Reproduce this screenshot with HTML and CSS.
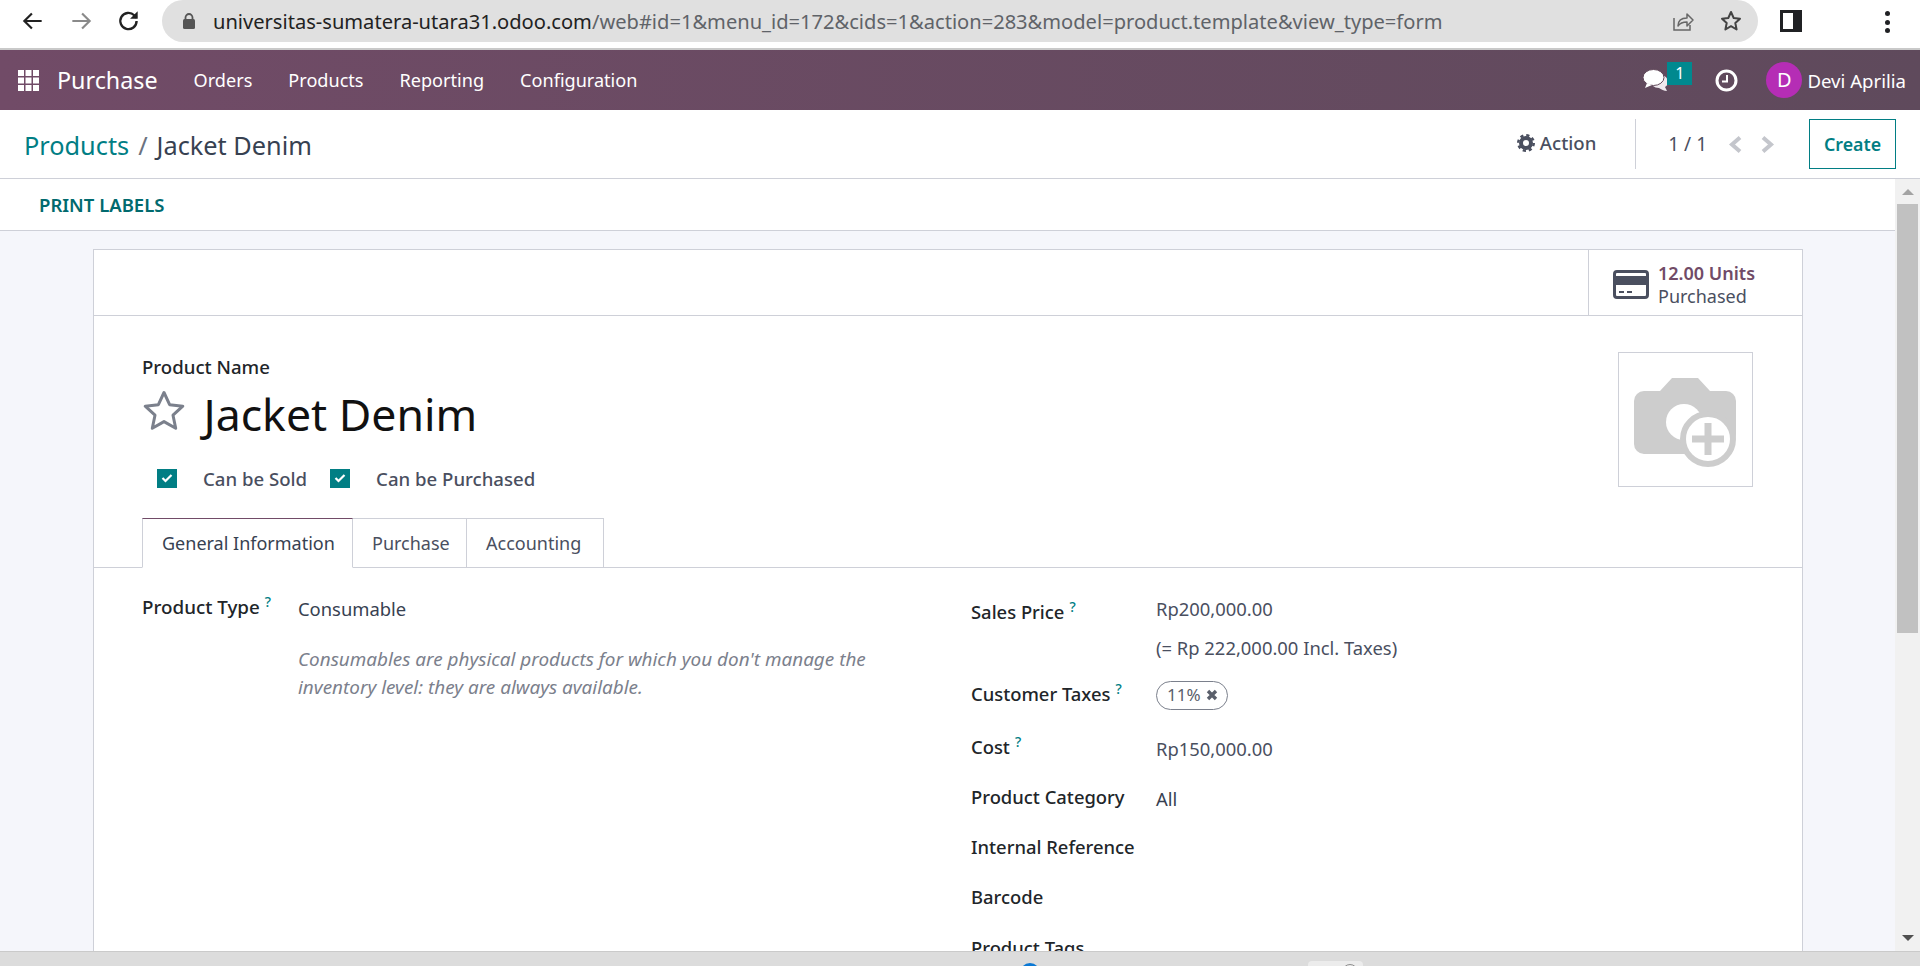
FILE: index.html
```html
<!DOCTYPE html>
<html lang="en">
<head>
<meta charset="utf-8">
<title>Jacket Denim</title>
<link rel="stylesheet" href="styles.css">
</head>
<body>
<div class="page">
  <header class="chrome">
    <div class="chrome-nav">
      <svg class="ci" width="26" height="26" viewBox="0 0 24 24"><path d="M20 12H4.500M11 5l-7 7 7 7" fill="none" stroke="#222" stroke-width="2"/></svg>
      <svg class="ci" width="26" height="26" viewBox="0 0 24 24"><path d="M4 12h15.500M13 5l7 7-7 7" fill="none" stroke="#8a8a8a" stroke-width="2"/></svg>
      <svg class="ci" width="26" height="26" viewBox="0 0 24 24"><path d="M19 12a7.500 7.500 0 1 1-2.200-5.300L19 9" fill="none" stroke="#222" stroke-width="2.200"/><path d="M20 3v7h-7z" fill="#222"/></svg>
    </div>
    <div class="omnibox">
      <svg class="lock" width="14" height="18" viewBox="0 0 14 18"><path d="M3.500 8V5.500a3.500 3.500 0 0 1 7 0V8" fill="none" stroke="#555" stroke-width="1.800"/><rect x="1" y="7" width="12" height="10" rx="1.500" fill="#555"/></svg>
      <div class="url"><span class="url-host">universitas-sumatera-utara31.odoo.com</span>/web#id=1&amp;menu_id=172&amp;cids=1&amp;action=283&amp;model=product.template&amp;view_type=form</div>
      <svg class="omni-icon" width="24" height="24" viewBox="0 0 24 24"><path d="M3 9v12h16v-5" fill="none" stroke="#666" stroke-width="1.500"/><path d="M7 17c0-6 4-8 9-8V5l6 6-6 6v-4c-4 0-7 1-9 4z" fill="none" stroke="#666" stroke-width="1.500" stroke-linejoin="round"/></svg>
      <svg class="omni-icon" width="24" height="24" viewBox="0 0 24 24"><path d="M12 3l2.700 6 6.300.7-4.700 4.300 1.300 6.500L12 17.200l-5.600 3.300 1.300-6.500L3 9.700 9.300 9z" fill="none" stroke="#444" stroke-width="2" stroke-linejoin="round"/></svg>
    </div>
    <div class="side-panel"><span></span></div>
    <div class="kebab"><i></i><i></i><i></i></div>
  </header>

  <nav class="navbar">
    <svg class="apps" width="21" height="21" viewBox="0 0 21 21" fill="#fff"><rect width="6" height="6"/><rect x="7.500" width="6" height="6"/><rect x="15" width="6" height="6"/><rect y="7.500" width="6" height="6"/><rect x="7.500" y="7.500" width="6" height="6"/><rect x="15" y="7.500" width="6" height="6"/><rect y="15" width="6" height="6"/><rect x="7.500" y="15" width="6" height="6"/><rect x="15" y="15" width="6" height="6"/></svg>
    <span class="brand">Purchase</span>
    <span class="menu-item">Orders</span>
    <span class="menu-item">Products</span>
    <span class="menu-item">Reporting</span>
    <span class="menu-item">Configuration</span>
    <div class="nav-right">
      <div class="chat">
        <svg width="27" height="23" viewBox="0 0 27 23"><path d="M14 5c6 0 11 3 11 8 0 2-1 4-3 5l2 4c-3 0-6-2-8-3-5 0-8-3-8-7s3-7 6-7z" fill="#efe9ee"/><ellipse cx="10.500" cy="8.500" rx="10.500" ry="8" fill="#fff" stroke="#624a5b" stroke-width="1"/><path d="M4 14l-2 5 7-3z" fill="#fff"/></svg>
        <span class="chat-badge">1</span>
      </div>
      <svg class="clock" width="23" height="23" viewBox="0 0 23 23"><circle cx="11.500" cy="11.500" r="9.500" fill="none" stroke="#fff" stroke-width="3"/><path d="M12 6v6.500H7" fill="none" stroke="#fff" stroke-width="2"/></svg>
      <span class="avatar">D</span>
      <span class="user">Devi Aprilia</span>
    </div>
  </nav>

  <section class="control-panel">
    <div class="crumbs"><span class="crumb-link">Products</span><span class="crumb-sep">/</span><span class="crumb-cur">Jacket Denim</span></div>
    <div class="action">
      <svg width="18" height="18" viewBox="0 0 18 18"><circle cx="9" cy="9" r="5" fill="none" stroke="#4a4f5f" stroke-width="4"/><circle cx="9" cy="9" r="7.800" fill="none" stroke="#4a4f5f" stroke-width="2.400" stroke-dasharray="3.200 2.930"/></svg>
      <span>Action</span>
    </div>
    <div class="pager">
      <span class="pager-count">1 / 1</span>
      <svg width="15" height="19" viewBox="0 0 15 19"><path d="M12 2.500l-8 7 8 7" fill="none" stroke="#c4c6cc" stroke-width="4"/></svg>
      <svg width="15" height="19" viewBox="0 0 15 19"><path d="M3 2.500l8 7-8 7" fill="none" stroke="#c4c6cc" stroke-width="4"/></svg>
    </div>
    <div class="create">Create</div>
  </section>

  <div class="work">
    <main class="main">
      <div class="statusbar"><span class="print">PRINT LABELS</span></div>
      <div class="canvas">
        <article class="sheet">
          <div class="stats">
            <div class="stat">
              <svg width="36" height="29" viewBox="0 0 36 29"><rect x="1.500" y="1.500" width="33" height="26" rx="2.500" fill="none" stroke="#4a4f5f" stroke-width="3"/><rect x="2" y="6" width="32" height="9" fill="#4a4f5f"/><path d="M6 22h5M14 22h5" stroke="#4a4f5f" stroke-width="2"/></svg>
              <div class="stat-text"><div class="stat-value">12.00 Units</div><div class="stat-label">Purchased</div></div>
            </div>
          </div>
          <div class="head">
            <div>
              <div class="name-label">Product Name</div>
              <div class="title-row">
                <svg width="44" height="42" viewBox="0 0 44 42"><path d="M22 3.500l5.600 12.200 13.200 1.500-9.800 9 2.700 13L22 32.600 10.300 39.200l2.700-13-9.800-9 13.200-1.500z" fill="none" stroke="#7b808c" stroke-width="3" stroke-linejoin="round"/></svg>
                <h1 class="title">Jacket Denim</h1>
              </div>
              <div class="options">
                <span class="check"><svg width="12" height="10" viewBox="0 0 12 10"><path d="M1.500 5l3 3 6-6" fill="none" stroke="#fff" stroke-width="2.200"/></svg></span>
                <span class="opt-label first">Can be Sold</span>
                <span class="check"><svg width="12" height="10" viewBox="0 0 12 10"><path d="M1.500 5l3 3 6-6" fill="none" stroke="#fff" stroke-width="2.200"/></svg></span>
                <span class="opt-label">Can be Purchased</span>
              </div>
            </div>
            <div class="image-box">
              <svg width="104" height="92" viewBox="0 0 104 92">
                <path d="M10 13h16L38 0h26l12 13h16a10 10 0 0 1 10 10v33a20 20 0 0 1-20 20H10A10 10 0 0 1 0 66V23a10 10 0 0 1 10-10z" fill="#cdcdcd"/>
                <circle cx="50" cy="44" r="18" fill="#fff"/>
                <circle cx="74" cy="61" r="25" fill="#fff" stroke="#cdcdcd" stroke-width="6"/>
                <path d="M74 45v32M58 61h32" stroke="#cdcdcd" stroke-width="7"/>
              </svg>
            </div>
          </div>
          <div class="tabs">
            <span class="tab active">General Information</span>
            <span class="tab">Purchase</span>
            <span class="tab">Accounting</span>
          </div>
          <div class="form">
            <div class="col-left">
              <div class="type-row">
                <span class="label">Product Type<sup class="help">?</sup></span>
                <span class="value">Consumable</span>
              </div>
              <p class="note">Consumables are physical products for which you don't manage the inventory level: they are always available.</p>
            </div>
            <div class="col-right">
              <div class="row r-price"><span class="label">Sales Price<sup class="help">?</sup></span><span class="value muted shift-up">Rp200,000.00</span></div>
              <div class="row r-incl"><span class="label"></span><span class="value muted">(= Rp 222,000.00 Incl. Taxes)</span></div>
              <div class="row r-tax"><span class="label">Customer Taxes<sup class="help">?</sup></span><span class="tag">11%<svg width="12" height="12" viewBox="0 0 12 12"><path d="M2 2l8 8M10 2l-8 8" stroke="#5a5f6b" stroke-width="3.400"/></svg></span></div>
              <div class="row r-cost"><span class="label">Cost<sup class="help">?</sup></span><span class="value muted shift-down">Rp150,000.00</span></div>
              <div class="row r-std"><span class="label">Product Category</span><span class="value shift-down">All</span></div>
              <div class="row r-std"><span class="label">Internal Reference</span></div>
              <div class="row r-std"><span class="label">Barcode</span></div>
              <div class="row r-std r-wide"><span class="label">Product Tags</span></div>
            </div>
          </div>
        </article>
      </div>
    </main>
    <aside class="scrollbar">
      <span class="arrow up"></span>
      <span class="thumb"></span>
      <span class="arrow down"></span>
    </aside>
  </div>

  <footer class="taskbar">
    <span class="task-dot"></span>
    <span class="task-box"><i></i></span>
  </footer>
</div>
</body>
</html>
```

FILE: styles.css
```css
* { box-sizing: border-box; }
html, body { margin: 0; height: 100%; overflow: hidden; }
body { font-family: "Noto Sans", "Liberation Sans", sans-serif; font-size: 18px; color: #374151; background: #fff; }
.page { display: flex; flex-direction: column; height: 966px; }

.chrome { height: 50px; flex: none; display: flex; align-items: flex-start; border-bottom: 2px solid #c9c9c9; background: #fff; }
.chrome-nav { width: 162px; height: 42px; flex: none; display: flex; align-items: center; gap: 22px; padding-left: 20px; }
.omnibox { width: 1596px; height: 42px; flex: none; display: flex; align-items: center; background: #e0e0e0; border-radius: 21px; padding-left: 20px; }
.lock { flex: none; }
.url { font-size: 20.100px; color: #5f6368; margin-left: 17px; flex: 1; white-space: nowrap; }
.url-host { color: #222; }
.omni-icon { flex: none; margin-right: 24px; }
.omni-icon:last-child { margin-right: 15px; }
.side-panel { width: 22px; height: 22px; margin: 10px 0 0 22px; background: #202124; padding: 3px 9px 3px 3px; flex: none; }
.side-panel span { display: block; height: 100%; background: #fff; }
.kebab { display: flex; flex-direction: column; gap: 3.500px; margin: 11px 0 0 83px; }
.kebab i { display: block; width: 5px; height: 5px; border-radius: 50%; background: #202124; }

.navbar { height: 60px; flex: none; display: flex; align-items: center; color: #fff; background: linear-gradient(90deg, #714b67, #5f4a5c); padding-left: 18px; }
.apps { flex: none; margin-right: 18px; }
.brand { font-size: 23.300px; margin-right: 36px; }
.menu-item { font-size: 18.100px; margin-right: 36px; }
.nav-right { margin-left: auto; display: flex; align-items: center; height: 100%; padding-right: 14px; }
.chat { position: relative; width: 27px; height: 23px; margin-right: 45px; }
.chat svg { display: block; }
.chat-badge { position: absolute; left: 24px; top: -7px; width: 25px; height: 23px; background: #00898f; font-size: 16px; text-align: center; line-height: 22px; }
.clock { flex: none; margin-right: 28px; }
.avatar { width: 36px; height: 36px; border-radius: 50%; background: #b52db5; text-align: center; line-height: 35px; font-size: 20px; margin-right: 5px; }
.user { font-size: 18.600px; }

.control-panel { height: 69px; flex: none; display: flex; align-items: center; border-bottom: 1px solid #ced0d8; background: #fff; padding-left: 24px; }
.crumbs { font-size: 25.300px; flex: 1; padding-top: 1px; }
.crumb-link { color: #017e84; }
.crumb-sep { color: #6b7280; margin: 0 9px; }
.crumb-cur { color: #374151; }
.action { display: flex; align-items: center; gap: 5px; font-size: 18.600px; color: #4a4f5f; font-weight: 500; margin-right: 39px; margin-top: -3px; }
.pager { height: 50px; display: flex; align-items: center; border-left: 1px solid #ced0d8; padding-left: 32px; color: #4a4f5f; gap: 17px; margin-right: 34px; }
.pager-count { font-size: 19px; margin-right: 4px; }
.create { width: 87px; height: 50px; border: 1px solid #017e84; color: #017e84; font-weight: 600; font-size: 17.800px; display: flex; align-items: center; justify-content: center; margin-right: 24px; }

.work { flex: 1; display: flex; min-height: 0; }
.main { flex: 1; min-width: 0; overflow: hidden; background: #f5f6fb; }
.statusbar { height: 52px; display: flex; align-items: center; background: #fff; border-bottom: 1px solid #ced0d8; padding-left: 39px; }
.print { font-size: 18.500px; font-weight: 600; color: #016a6e; }
.canvas { padding: 18px 92px 0 93px; }
.sheet { background: #fff; border: 1px solid #ced0d8; border-bottom: 0; }
.stats { height: 66px; display: flex; justify-content: flex-end; border-bottom: 1px solid #ced0d8; }
.stat { width: 214px; display: flex; align-items: center; gap: 9px; border-left: 1px solid #ced0d8; padding: 3px 0 0 24px; }
.stat-text { padding-top: 2px; }
.stat-value { font-size: 18px; font-weight: 600; color: #714b67; line-height: 23px; }
.stat-label { font-size: 18px; color: #4a4f5f; line-height: 23px; }

.head { display: flex; justify-content: space-between; padding: 0 49px 0 48px; height: 202px; }
.name-label { margin-top: 39px; line-height: 24px; font-size: 18.600px; color: #212529; font-weight: 500; }
.title-row { display: flex; align-items: center; height: 50px; margin-top: 6px; gap: 17.500px; }
.title { margin: 7px 0 0; font-size: 44.600px; font-weight: 400; color: #111; line-height: 50px; white-space: nowrap; }
.options { display: flex; align-items: center; height: 24px; margin-top: 31px; padding-left: 15px; }
.check { width: 20px; height: 19px; background: #017e84; display: flex; align-items: center; justify-content: center; flex: none; }
.opt-label { font-size: 18.600px; font-weight: 500; color: #4a4f5f; margin-left: 26px; }
.opt-label.first { margin-right: 23px; }
.image-box { width: 135px; height: 135px; margin-top: 36px; border: 1px solid #ced0d8; display: flex; align-items: center; justify-content: center; padding-top: 9px; }

.tabs { display: flex; height: 50px; border-bottom: 1px solid #ced0d8; padding-left: 48px; }
.tab { height: 50px; padding: 0 19px; display: flex; align-items: center; font-size: 18px; color: #4a4f5f; border: 1px solid #ced0d8; border-left: 0; white-space: nowrap; }
.tab:nth-child(1) { width: 211px; border-left: 1px solid #ced0d8; border-top: 1px solid #714b67; border-bottom-color: #fff; color: #374151; background: #fff; }
.tab:nth-child(2) { width: 114px; }
.tab:nth-child(3) { width: 137px; }

.form { display: grid; grid-template-columns: 829px 1fr; padding-left: 48px; height: 400px; }
.label { font-weight: 500; font-size: 18.400px; color: #212529; white-space: nowrap; }
.value { font-size: 18.400px; color: #374151; }
.muted { color: #4a4f5f; }
.help { font-size: 14px; color: #017e84; font-weight: 500; margin-left: 5px; vertical-align: 7px; line-height: 0; }
.type-row { display: grid; grid-template-columns: 156px 1fr; margin-top: 26px; line-height: 26px; }
.type-row .label { font-size: 18.800px; }
.type-row .value { position: relative; top: 2px; }
.note { margin: 25px 0 0 156px; width: 620px; font-style: italic; font-size: 18.900px; line-height: 28px; color: #7b808c; }
.col-right { padding-top: 31px; }
.row { display: grid; grid-template-columns: 185px 1fr; align-items: center; line-height: 26px; }
.r-price { height: 26px; }
.r-incl { height: 26px; margin-top: 10px; }
.r-tax { height: 30px; margin-top: 18px; }
.r-cost { height: 26px; margin-top: 25px; }
.r-std { height: 26px; margin-top: 24px; }
.r-wide { margin-top: 25px; }
.shift-up { position: relative; top: -3px; }
.shift-down { position: relative; top: 2px; }
.tag { width: 72px; height: 29px; border: 1.500px solid #7b808c; border-radius: 15px; display: flex; align-items: center; gap: 5px; padding-left: 10px; font-size: 17px; color: #5a5f6b; position: relative; top: 1px; }

.scrollbar { width: 25px; flex: none; background: #f1f1f1; display: flex; flex-direction: column; align-items: center; padding-top: 10px; }
.arrow { width: 0; height: 0; border-left: 6px solid transparent; border-right: 6px solid transparent; flex: none; }
.arrow.up { border-bottom: 6px solid #a3a3a3; }
.arrow.down { border-top: 6px solid #505050; margin-top: auto; margin-bottom: 10px; }
.thumb { width: 21px; height: 429px; background: #c1c1c1; margin-top: 9px; flex: none; }

.taskbar { height: 15px; flex: none; background: #dcdcdc; border-top: 1px solid #cacaca; display: flex; overflow: hidden; padding: 11px 0 0 1020px; }
.task-dot { width: 20px; height: 20px; border-radius: 50%; background: #0a78d4; flex: none; }
.task-box { width: 55px; height: 20px; margin: -2px 0 0 268px; background: #ececec; border-radius: 4px; flex: none; padding: 3px 0 0 34px; }
.task-box i { display: block; width: 16px; height: 16px; border: 1.500px solid #8d8d8d; border-radius: 50%; }
```
